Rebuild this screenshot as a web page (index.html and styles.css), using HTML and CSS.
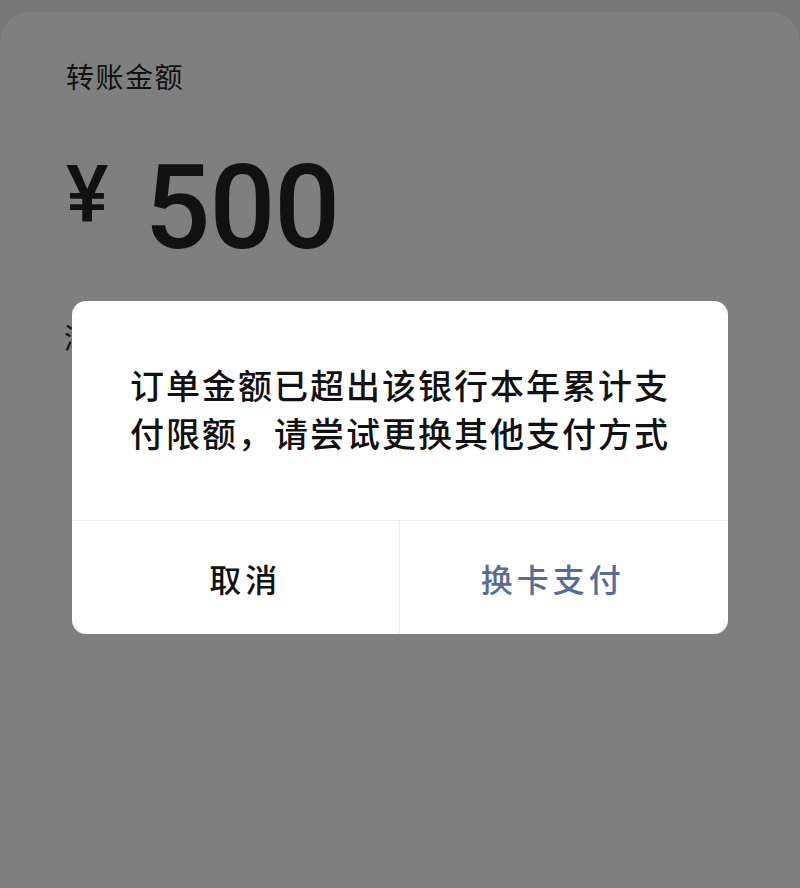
FILE: index.html
```html
<!DOCTYPE html>
<html>
<head>
  <title>转账</title>
  <link rel="stylesheet" href="styles.css">
</head>
<body>
  <div class="sheet">
    <div class="transfer">
      <p class="label">转账金额</p>
      <div class="amount">
        <span class="currency">¥</span>
        <span class="value">500</span>
      </div>
      <p class="note">添加转账说明</p>
    </div>
  </div>

  <div class="dialog">
    <p class="dialog-message">订单金额已超出该银行本年累计支付限额，请尝试更换其他支付方式</p>
    <div class="dialog-actions">
      <button class="dialog-button cancel">取消</button>
      <button class="dialog-button confirm">换卡支付</button>
    </div>
  </div>
</body>
</html>
```

FILE: styles.css
```css
body {
  margin: 0;
  padding: 0;
  background-color: #777777;
  font-family: "Noto Sans CJK SC", "Noto Sans", sans-serif;
  overflow: hidden;
}

/* page behind the dimmed mask */
.sheet {
  margin-top: 12px;
  height: 876px;
  background-color: #7f7f7f;
  border-radius: 30px 30px 0 0;
}

.transfer {
  padding: 44px 0 0 66px;
  color: #111111;
}

.label {
  margin: 0;
  font-size: 28px;
  letter-spacing: 1.5px;
  line-height: 40px;
}

.amount {
  display: flex;
  align-items: flex-start;
  margin-top: 62px;
  font-family: Roboto, "Liberation Sans", sans-serif;
  font-weight: 500;
}

.currency {
  font-size: 80px;
  line-height: 80px;
  margin-top: -3px;
  margin-right: 36px;
}

.value {
  font-size: 116px;
  line-height: 100px;
  letter-spacing: -1px;
}

.note {
  margin: 59px 0 0 -2px;
  font-size: 28px;
  line-height: 40px;
}

/* alert box */
.dialog {
  position: absolute;
  left: 72px;
  top: 301px;
  width: 656px;
  height: 333px;
  background-color: #ffffff;
  border-radius: 14px;
  display: flex;
  flex-direction: column;
}

.dialog-message {
  margin: 0;
  flex: 1;
  padding: 60px 54px 0 58px;
  font-size: 34px;
  font-weight: 500;
  line-height: 48px;
  letter-spacing: 2px;
  color: #111111;
}

.dialog-actions {
  display: flex;
  height: 113px;
  border-top: 1px solid #ececec;
}

.dialog-button {
  flex: 1;
  border: none;
  background: none;
  padding: 0;
  font-family: "Noto Sans CJK SC", sans-serif;
  font-size: 32px;
  font-weight: 500;
  letter-spacing: 4px;
  cursor: pointer;
}

.cancel {
  color: #111111;
  padding-left: 20px;
  border-right: 1px solid #ececec;
}

.confirm {
  color: #576b95;
  padding-right: 22px;
}
```
